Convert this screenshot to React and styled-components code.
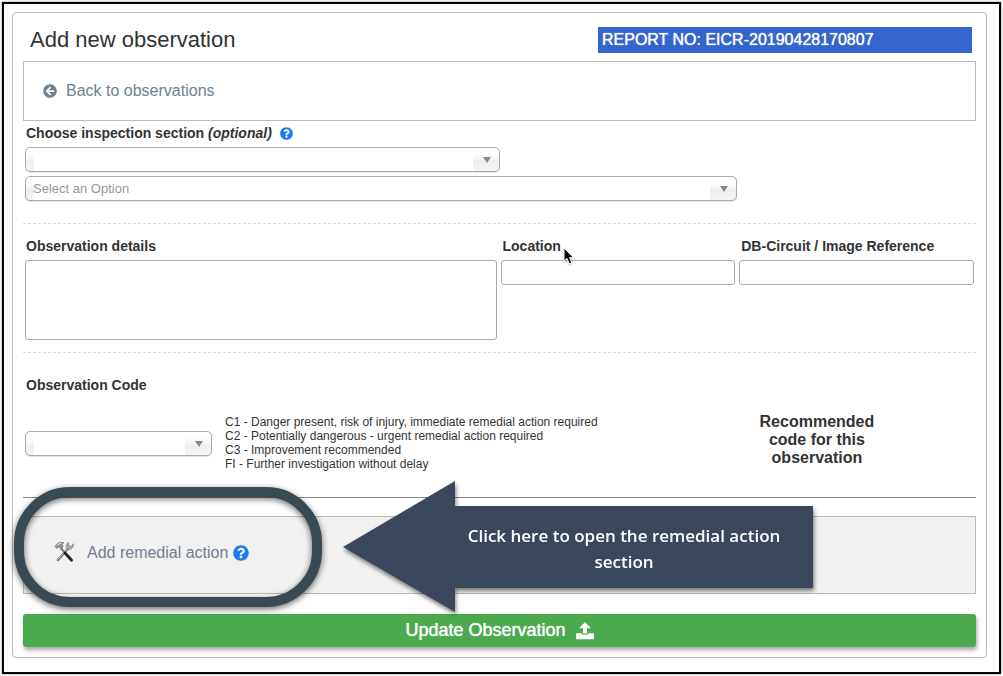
import React from "react"
import styled, { createGlobalStyle, css } from 'styled-components'
import { FaArrowCircleLeft, FaQuestionCircle } from 'react-icons/fa'

const GlobalStyle = createGlobalStyle`
    * {
        box-sizing: border-box;
    }

    body {
        margin: 0;
        background: #fff;
        color: #333;
        font-family: "Liberation Sans", Arial, sans-serif;
        font-size: 14px;
    }
`

const Frame = styled.main`
    margin: 2px;
    padding: 8px 12px 14px 8px;
    border: 2px solid #000;
    box-shadow: 0 0 2px #777;
`

const Panel = styled.form`
    padding: 0 10px 10px;
    border: 1px solid #bbb;
    border-radius: 4px;
`

const Header = styled.header`
    display: flex;
    justify-content: space-between;
    padding: 14px 4px 8px 7px;
`

const Title = styled.h1`
    margin: 0;
    font-size: 22px;
    font-weight: normal;
    line-height: 26px;
`

const ReportNo = styled.div`
    flex: 0 0 374px;
    padding: 0 4px;
    background: #3366cc;
    color: #fff;
    font-size: 16px;
    line-height: 26px;
    text-shadow: 0 0 1px #fff;
`

const BackBox = styled.nav`
    padding: 18px 19px;
    border: 1px solid #bbb;
`

const PanelLink = styled.a`
    display: inline-flex;
    align-items: center;
    gap: ${props => props.$gap || '9px'};
    color: #708090;
    font-size: 16px;
    line-height: 22px;
    text-decoration: none;
`

const Section = styled.section`
    padding: ${props => props.$pad};
`

const Label = styled.label`
    position: relative;
    display: inline-block;
    padding-left: ${props => props.$indent || '1px'};
    font-weight: bold;
    line-height: 20px;
`

const LabelRow = styled.div`
    display: flex;
    align-items: center;
    gap: 8px;
    height: 20px;
    margin-bottom: 4px;
`

const HelpIcon = styled(FaQuestionCircle)`
    color: #1a7af8;
    font-size: ${props => props.$size};
`

const SelectWrap = styled.div`
    position: relative;
    width: ${props => props.$width};
    margin-bottom: ${props => props.$gap || '0'};

    &::after {
        content: '';
        position: absolute;
        top: 10px;
        right: 9px;
        border: 4px solid transparent;
        border-top: 6px solid #888;
        border-bottom: 0;
        pointer-events: none;
    }
`

const shade = 'linear-gradient(#fff 20%, #f6f6f6 50%, #eee 52%, #f4f4f4 100%)'

const Select = styled.select`
    display: block;
    width: 100%;
    height: 25px;
    padding: 0 30px 0 7px;
    border: 1px solid #aaa;
    border-radius: 5px;
    appearance: none;
    background: ${shade} left / 8px 100% no-repeat, ${shade} right / 26px 100% no-repeat, #fff;
    box-shadow: 0 1px 1px rgba(0, 0, 0, .1);
    color: #999;
    font-family: inherit;
    font-size: 13px;
`

const Divider = styled.hr`
    margin: 0;
    border: 0;
    border-top: 1px ${props => props.$solid ? 'solid #888' : 'dashed #ddd'};
`

const DetailsGrid = styled.div`
    display: grid;
    grid-template-columns: calc(50% - 3px) 1fr 1fr;
    gap: 4px;
    align-items: start;
`

const Field = styled.div`
    display: flex;
    flex-direction: column;
    align-items: flex-start;
    gap: 4px;
`

const fieldBox = css`
    display: block;
    width: 100%;
    margin: 0;
    border: 1px solid #aaa;
    border-radius: 3px;
    background: #fff;
    font-family: inherit;
    font-size: 14px;
`

const TextBox = styled.input`
    ${fieldBox}
    height: 25px;
`

const TextArea = styled.textarea`
    ${fieldBox}
    height: 80px;
    resize: none;
`

const Pointer = styled.svg`
    position: absolute;
    top: 11px;
    left: 100%;
    width: 13px;
    height: 19px;
    filter: drop-shadow(0 1px 1px rgba(0, 0, 0, .3));
`

const CodeRow = styled.div`
    display: flex;
    align-items: center;
    gap: 13px;
    margin-top: 18px;
`

const CodeList = styled.ul`
    flex: 1;
    margin: 0;
    padding: 0;
    list-style: none;
    font-size: 12px;
    line-height: 14px;
`

const Recommended = styled.div`
    display: flex;
    justify-content: center;
    width: 33%;
    margin-bottom: 6px;
    padding-right: 1px;
    font-size: 16px;
    font-weight: bold;
    line-height: 18px;
    text-align: center;

    p {
        max-width: 120px;
        margin: 0;
    }
`

const Remedial = styled.section`
    position: relative;
    display: flex;
    align-items: center;
    height: 78px;
    margin: 18px 0 20px;
    padding: 0 30px;
    border: 1px solid #bbb;
    background: #f1f1f1;

    a {
        padding-bottom: 7px;
    }
`

const LinkText = styled.span`
    display: inline-flex;
    align-items: center;
    gap: 5px;
    padding-top: 2px;
`

const Ring = styled.div`
    position: absolute;
    top: -30px;
    left: -10px;
    width: 308px;
    height: 120px;
    border: 10px solid #3a4a54;
    border-radius: 56px;
    filter: drop-shadow(0 2px 3px rgba(0, 0, 0, .6));
    pointer-events: none;
`

const Callout = styled.div`
    position: absolute;
    top: -36px;
    left: 319px;
    display: flex;
    align-items: center;
    width: 470px;
    filter: drop-shadow(1px 3px 2px rgba(0, 0, 0, .5));
`

const CalloutHead = styled.svg`
    flex: none;
    width: 112px;
    height: 131px;
`

const CalloutText = styled.p`
    flex: 1;
    margin: 0;
    padding: 17px 30px 13px 10px;
    background: #3b475a;
    color: #fff;
    font-family: "Open Sans", "Noto Sans", sans-serif;
    font-size: 17px;
    font-weight: 600;
    line-height: 26px;
    text-align: center;
`

const SubmitButton = styled.button`
    display: flex;
    align-items: center;
    justify-content: center;
    gap: 10px;
    width: 100%;
    height: 33px;
    padding: 0;
    border: 0;
    border-radius: 3px;
    background: #4aaa4d;
    box-shadow: 1px 3px 4px rgba(0, 0, 0, .35);
    color: #fff;
    font-family: inherit;
    font-size: 18px;
    text-shadow: 0 0 1px #fff;
`

const Tools = () => (
    <svg width="20" height="22" viewBox="0 0 20 22" aria-hidden="true">
        <path d="M14 7.5 4 18.8" stroke="#777" strokeWidth="2.6" strokeLinecap="round" />
        <path d="M13.5 7.5 4 18.2" stroke="#c4c7ca" strokeWidth="1" strokeLinecap="round" />
        <path d="M14.5 1.6c-2 .8-2.8 2.6-2.3 4.6l1.9 2.2c2.4.5 4.6-.8 5.2-3.4l.1-2.3-2.2 2.6-2-.4-.6-2z" fill="#a4a7ac" stroke="#777" strokeWidth=".6" />
        <path d="M7.2 7.5 11 11.8" stroke="#777" strokeWidth="2" />
        <path d="m11 12 6.6 7.2" stroke="#222" strokeWidth="2.8" strokeLinecap="round" />
        <path d="M1 5.5 3.2 2.7c2-1.5 4.4-1.7 6.8-1L8 3.2l1.2 2.3-2.3 2.6L4.6 6 2.8 7.6z" fill="#92969c" stroke="#6c6f74" strokeWidth=".6" />
        <path d="M3 4.5c1.2-1.4 2.4-2 4.2-2.1" stroke="#e0e3e6" strokeWidth="1" fill="none" />
    </svg>
)

const UploadIcon = () => (
    <svg width="18" height="18" viewBox="0 0 18 18" fill="#fff" aria-hidden="true">
        <path d="M9 0 14.2 5.4c.3.4.1.9-.4.9H11v4.6c0 .4-.3.7-.7.7H7.7c-.4 0-.7-.3-.7-.7V6.300H4.200c-.5 0-.7-.5-.4-.9z" />
        <path d="M1 11.300h4.800c.2.900.900 1.500 1.900 1.500h2.600c1 0 1.700-.600 1.900-1.500H17c.600 0 1 .400 1 1v3.900c0 .600-.400 1-1 1H1c-.600 0-1-.400-1-1v-3.900c0-.600.400-1 1-1z" />
    </svg>
)

const codes = [
    'C1 - Danger present, risk of injury, immediate remedial action required',
    'C2 - Potentially dangerous - urgent remedial action required',
    'C3 - Improvement recommended',
    'FI - Further investigation without delay',
]

const Dropdown = ({ id, label, width, gap, placeholder = '' }) => (
    <SelectWrap $width={width} $gap={gap}>
        <Select id={id} aria-label={label} defaultValue="">
            <option value="">{placeholder}</option>
        </Select>
    </SelectWrap>
)

const App = () => {
    return (
        <>
            <GlobalStyle />
            <Frame>
                <Panel onSubmit={e => e.preventDefault()}>
                    <Header>
                        <Title>Add new observation</Title>
                        <ReportNo>REPORT NO: EICR-20190428170807</ReportNo>
                    </Header>

                    <BackBox>
                        <PanelLink href="#observations">
                            <FaArrowCircleLeft size={14} />
                            Back to observations
                        </PanelLink>
                    </BackBox>

                    <Section $pad="2px 2px 22px">
                        <LabelRow>
                            <Label htmlFor="section">Choose inspection section <em>(optional)</em></Label>
                            <HelpIcon $size="13px" />
                        </LabelRow>
                        <Dropdown id="section" width="50%" gap="4px" />
                        <Dropdown id="item" label="Inspection item" width="75%" placeholder="Select an Option" />
                    </Section>

                    <Divider />

                    <Section $pad="12px 2px">
                        <DetailsGrid>
                            <Field>
                                <Label htmlFor="details">Observation details</Label>
                                <TextArea id="details" />
                            </Field>
                            <Field>
                                <Label htmlFor="location" $indent="2px">
                                    Location
                                    <Pointer viewBox="0 0 13 19" aria-hidden="true">
                                        <path d="M3 1v13l3-2.6 2.4 5.4 2.4-1-2.3-5.2h4z" fill="#000" stroke="#fff" strokeWidth="1" />
                                    </Pointer>
                                </Label>
                                <TextBox id="location" type="text" />
                            </Field>
                            <Field>
                                <Label htmlFor="reference" $indent="2px">DB-Circuit / Image Reference</Label>
                                <TextBox id="reference" type="text" />
                            </Field>
                        </DetailsGrid>
                    </Section>

                    <Divider />

                    <Section $pad="22px 2px 24px">
                        <Label htmlFor="code">Observation Code</Label>
                        <CodeRow>
                            <Dropdown id="code" width="187px" />
                            <CodeList>
                                {codes.map(code => <li key={code}>{code}</li>)}
                            </CodeList>
                            <Recommended>
                                <p>Recommended code for this observation</p>
                            </Recommended>
                        </CodeRow>
                    </Section>

                    <Divider $solid />

                    <Remedial>
                        <PanelLink href="#remedial" $gap="13px">
                            <Tools />
                            <LinkText>
                                Add remedial action
                                <HelpIcon $size="16px" />
                            </LinkText>
                        </PanelLink>
                        <Ring />
                        <Callout>
                            <CalloutHead viewBox="0 0 112 131" aria-hidden="true">
                                <path d="M0 66 112 0v131z" fill="#3b475a" />
                            </CalloutHead>
                            <CalloutText>Click here to open the remedial action section</CalloutText>
                        </Callout>
                    </Remedial>

                    <SubmitButton type="submit">
                        Update Observation
                        <UploadIcon />
                    </SubmitButton>
                </Panel>
            </Frame>
        </>
    )
}

export default App
